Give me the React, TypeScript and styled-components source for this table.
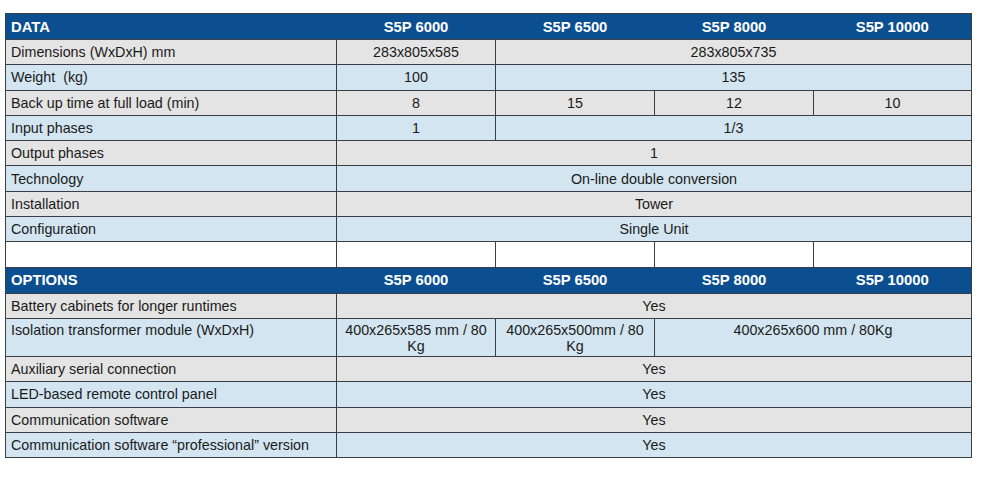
import styled, { createGlobalStyle } from "styled-components";

const GlobalStyle = createGlobalStyle`
  html, body {
    margin: 0;
    padding: 0;
    background: #ffffff;
  }
  body {
    font-family: "Liberation Sans", Arial, sans-serif;
  }
`;

const colors = {
  blue: "#0b4f91",
  gray: "#e4e4e4",
  sky: "#d3e5f0",
  white: "#ffffff",
  line: "#3b3f44",
  text: "#1a1a1a",
};

type Tone = "gray" | "sky" | "white";

const Page = styled.div`
  padding: 13px 0 0 5px;
`;

const SpecTable = styled.table`
  width: 966px;
  border-collapse: collapse;
  table-layout: fixed;
  font-size: 14.3px;
  color: ${colors.text};
  border: 1px solid ${colors.line};
`;

const HeadRow = styled.tr`
  height: 26px;
  background: ${colors.blue};
  color: ${colors.white};
`;

const HeadCell = styled.th<{ $left?: boolean }>`
  padding: 0 5px;
  font-weight: 700;
  font-size: 14.8px;
  text-align: ${(p) => (p.$left ? "left" : "center")};
  border: none;
  border-top: 1px solid ${colors.line};
  border-bottom: 1px solid ${colors.line};
`;

const Row = styled.tr<{ $tone: Tone; $tall?: boolean }>`
  height: ${(p) => (p.$tall ? "38px" : "25.3px")};
  background: ${(p) => colors[p.$tone]};
`;

const Label = styled.td<{ $top?: boolean }>`
  padding: ${(p) => (p.$top ? "3px 5px 0" : "0 5px")};
  vertical-align: ${(p) => (p.$top ? "top" : "middle")};
  border: 1px solid ${colors.line};
  white-space: pre;
`;

const Value = styled.td<{ $top?: boolean }>`
  padding: ${(p) => (p.$top ? "3px 4px 0" : "0 4px")};
  text-align: center;
  vertical-align: ${(p) => (p.$top ? "top" : "middle")};
  border: 1px solid ${colors.line};
  line-height: 16px;
`;

const models = ["S5P 6000", "S5P 6500", "S5P 8000", "S5P 10000"];

type Spec = { label: string; values: [string, number][]; tall?: boolean };

const dataRows: Spec[] = [
  { label: "Dimensions (WxDxH) mm", values: [["283x805x585", 1], ["283x805x735", 3]] },
  { label: "Weight  (kg)", values: [["100", 1], ["135", 3]] },
  { label: "Back up time at full load (min)", values: [["8", 1], ["15", 1], ["12", 1], ["10", 1]] },
  { label: "Input phases", values: [["1", 1], ["1/3", 3]] },
  { label: "Output phases", values: [["1", 4]] },
  { label: "Technology", values: [["On-line double conversion", 4]] },
  { label: "Installation", values: [["Tower", 4]] },
  { label: "Configuration", values: [["Single Unit", 4]] },
];

const optionRows: Spec[] = [
  { label: "Battery cabinets for longer runtimes", values: [["Yes", 4]] },
  {
    label: "Isolation transformer module (WxDxH)",
    tall: true,
    values: [
      ["400x265x585 mm / 80 Kg", 1],
      ["400x265x500mm / 80 Kg", 1],
      ["400x265x600 mm / 80Kg", 2],
    ],
  },
  { label: "Auxiliary serial connection", values: [["Yes", 4]] },
  { label: "LED-based remote control panel", values: [["Yes", 4]] },
  { label: "Communication software", values: [["Yes", 4]] },
  { label: "Communication software \u201cprofessional\u201d version", values: [["Yes", 4]] },
];

const Header = ({ title }: { title: string }) => (
  <HeadRow>
    <HeadCell $left>{title}</HeadCell>
    {models.map((m) => (
      <HeadCell key={m}>{m}</HeadCell>
    ))}
  </HeadRow>
);

const SpecRow = ({ spec, index }: { spec: Spec; index: number }) => (
  <Row $tone={index % 2 === 0 ? "gray" : "sky"} $tall={spec.tall}>
    <Label $top={spec.tall}>{spec.label}</Label>
    {spec.values.map(([v, span], i) => (
      <Value key={i} colSpan={span} $top={spec.tall}>
        {v}
      </Value>
    ))}
  </Row>
);

export default function App() {
  return (
    <Page>
      <GlobalStyle />
      <SpecTable>
        <colgroup>
          <col style={{ width: 331 }} />
          <col style={{ width: 159 }} />
          <col style={{ width: 159 }} />
          <col style={{ width: 159 }} />
          <col style={{ width: 158 }} />
        </colgroup>
        <tbody>
          <Header title="DATA" />
          {dataRows.map((s, i) => (
            <SpecRow key={s.label} spec={s} index={i} />
          ))}
          <Row $tone="white">
            <Label />
            <Value />
            <Value />
            <Value />
            <Value />
          </Row>
          <Header title="OPTIONS" />
          {optionRows.map((s, i) => (
            <SpecRow key={s.label} spec={s} index={i} />
          ))}
        </tbody>
      </SpecTable>
    </Page>
  );
}
